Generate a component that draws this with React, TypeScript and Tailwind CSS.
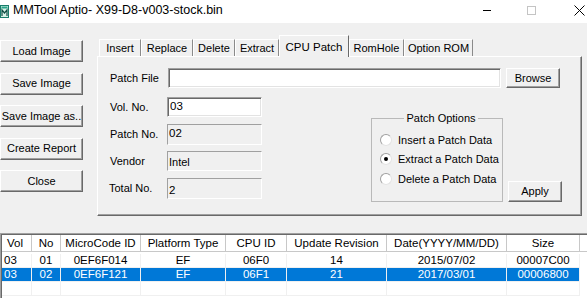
import React from 'react'

const font = { fontFamily: '"Liberation Sans", Arial, sans-serif' }

const raised =
  'bg-[#f0f0f0] border-t border-l border-white border-r border-b border-r-[#696969] border-b-[#696969] shadow-[inset_-1px_-1px_0_#a0a0a0]'

const sunken =
  'bg-white border border-[#a0a0a0] border-r-white border-b-white shadow-[inset_1px_1px_0_#696969,inset_-1px_-1px_0_#e3e3e3]'

const readonly =
  'bg-[#f0f0f0] border border-[#a0a0a0] border-r-white border-b-white'

function WinButton({ label, className }: { label: string; className: string }) {
  return (
    <div className={`${raised} ${className} flex items-center justify-center text-[11px] text-black whitespace-nowrap`}>
      {label}
    </div>
  )
}

function AppIcon() {
  return (
    <svg width="10" height="13" viewBox="0 0 10 13">
      <rect x="0.5" y="0.5" width="8" height="12" fill="#d9f2e8" stroke="#1a7d6b" />
      <rect x="1.5" y="1.5" width="6" height="2" fill="#2aa58a" />
      <path d="M2 11 V5 L4.5 8 L7 5 V11" fill="none" stroke="#0f4d44" strokeWidth="1.2" />
    </svg>
  )
}

function Radio({ checked, label }: { checked?: boolean; label: string }) {
  return (
    <div className="flex items-center h-[19.5px]">
      <div className="w-[12px] h-[12px] rounded-full bg-white border border-[#a0a0a0] border-r-[#e3e3e3] border-b-[#e3e3e3] flex items-center justify-center">
        {checked && <div className="w-[4px] h-[4px] rounded-full bg-black" />}
      </div>
      <span className="ml-[6px] text-[11px]">{label}</span>
    </div>
  )
}

const tabs = [
  { name: 'Insert', w: 'w-[42px]' },
  { name: 'Replace', w: 'w-[52px]' },
  { name: 'Delete', w: 'w-[42px]' },
  { name: 'Extract', w: 'w-[44px]' },
  { name: 'CPU Patch', w: 'w-[70px]', active: true },
  { name: 'RomHole', w: 'w-[55px]' },
  { name: 'Option ROM', w: 'w-[69px]' },
]

const columns = [
  { name: 'Vol', align: 'justify-start pl-[5px]' },
  { name: 'No', align: 'justify-center' },
  { name: 'MicroCode ID', align: 'justify-center' },
  { name: 'Platform Type', align: 'justify-center' },
  { name: 'CPU ID', align: 'justify-center' },
  { name: 'Update Revision', align: 'justify-center' },
  { name: 'Date(YYYY/MM/DD)', align: 'justify-center' },
  { name: 'Size', align: 'justify-center' },
]

const rows = [
  ['03', '01', '0EF6F014', 'EF', '06F0', '14', '2015/07/02', '00007C00'],
  ['03', '02', '0EF6F121', 'EF', '06F1', '21', '2017/03/01', '00006800'],
  ['', '', '', '', '', '', '', ''],
]

const gridCols = 'grid grid-cols-[30px_29px_80px_85px_61px_100px_120px_73px]'

export default function App() {
  return (
    <div style={font} className="w-[587px] h-[298px] overflow-hidden bg-[#f0f0f0] text-black">
      {/* Title bar */}
      <div className="h-[23px] bg-white flex items-center pb-[3px]">
        <div className="pl-0 pt-[2px]">
          <AppIcon />
        </div>
        <span className="ml-[3px] text-[12.5px]">MMTool Aptio- X99-D8-v003-stock.bin</span>
        <div className="ml-auto flex items-center">
          <div className="w-[8px] h-px bg-black" />
          <div className="ml-[36px] w-[9px] h-[9px] border border-[#c4c4c4]" />
          <svg className="ml-[38px]" width="11" height="11" viewBox="0 0 11 11">
            <path d="M0.5 0.5 L10.5 10.5 M10.5 0.5 L0.5 10.5" stroke="#000" strokeWidth="1" />
          </svg>
          <div className="w-[2px]" />
        </div>
      </div>

      {/* Body */}
      <div className="h-[210px] flex">
        {/* Left buttons */}
        <div className="w-[83px] pt-[17px] flex flex-col gap-[10.5px]">
          <WinButton label="Load Image" className="h-[22px]" />
          <WinButton label="Save Image" className="h-[22px]" />
          <WinButton label="Save Image as.." className="h-[22px]" />
          <WinButton label="Create Report" className="h-[22px]" />
          <WinButton label="Close" className="h-[22px]" />
        </div>

        {/* Tab control */}
        <div className="ml-[14px] pt-[12px] w-[485px]">
          <div className="flex items-end h-[21px] pl-[2px]">
            {tabs.map((t) =>
              t.active ? (
                <div
                  key={t.name}
                  className={`${t.w} relative z-10 h-[22px] -mb-px bg-[#f0f0f0] border-t border-l border-white border-r border-r-[#696969] flex items-start justify-center pt-[3px] text-[11.5px]`}
                >
                  {t.name}
                </div>
              ) : (
                <div
                  key={t.name}
                  className={`${t.w} h-[17px] bg-[#f0f0f0] border-t border-l border-white border-r border-r-[#8a8a8a] flex items-center justify-center text-[11px]`}
                >
                  {t.name}
                </div>
              ),
            )}
          </div>
          <div className="h-[160px] border-t border-l border-white border-r border-b border-r-[#696969] border-b-[#696969] shadow-[inset_-1px_-1px_0_#a0a0a0] pl-[12px] pt-[11px]">
            {/* Patch file row */}
            <div className="flex items-center">
              <span className="w-[58px] text-[11px]">Patch File</span>
              <div className={`${sunken} w-[333px] h-[20px]`} />
              <WinButton label="Browse" className="ml-[5px] w-[54px] h-[20px]" />
            </div>

            <div className="flex mt-[9px]">
              {/* Fields */}
              <div className="flex flex-col gap-[7px]">
                <div className="flex items-center h-[20px]">
                  <span className="w-[57px] text-[11px]">Vol. No.</span>
                  <div className={`${sunken} w-[95px] h-[20px] flex items-center pl-[2px] text-[11.5px]`}>03</div>
                </div>
                <div className="flex items-center h-[20px]">
                  <span className="w-[57px] text-[11px]">Patch No.</span>
                  <div className={`${readonly} w-[95px] h-[21px] flex items-center pl-[1px] text-[11.5px]`}>02</div>
                </div>
                <div className="flex items-center h-[20px]">
                  <span className="w-[57px] text-[11px]">Vendor</span>
                  <div className={`${readonly} w-[95px] h-[20px] pl-[1px] pt-[2px] text-[11px]`}>Intel</div>
                </div>
                <div className="flex items-center h-[20px]">
                  <span className="w-[57px] text-[11px] -ml-px">Total No.</span>
                  <div className={`${readonly} w-[95px] h-[21px] pl-[1px] pt-[3px] text-[11.5px] ml-px`}>2</div>
                </div>
              </div>

              {/* Patch options */}
              <fieldset className="ml-[109px] mt-[15px] w-[132px] h-[90px] border border-[#b9b9b9] pl-[8px] pt-[5px]">
                <legend className="mx-auto px-[2px] text-[11px] leading-[13px]">Patch Options</legend>
                <Radio label="Insert a Patch Data" />
                <Radio label="Extract a Patch Data" checked />
                <Radio label="Delete a Patch Data" />
              </fieldset>

              <WinButton label="Apply" className="ml-[5px] mt-[84px] w-[54px] h-[21px]" />
            </div>
          </div>
        </div>
      </div>

      {/* List view */}
      <div className="h-[65px] bg-white border-t border-l border-[#a0a0a0] shadow-[inset_1px_1px_0_#696969] pt-px pl-px">
        <div className={`${gridCols} h-[17px] bg-white border-b border-[#c8c8c8]`}>
          {columns.map((c) => (
            <div key={c.name} className={`flex items-center ${c.align} border-r border-[#c8c8c8] text-[11.5px] whitespace-nowrap`}>
              {c.name}
            </div>
          ))}
        </div>
        <div className="pt-[2px]">
          {rows.map((r, i) => (
            <div key={i} className={`${gridCols}`}>
              {r.map((v, j) => (
                <div
                  key={j}
                  className={`h-[14px] flex items-center border-r border-b border-[#f0f0f0] text-[11.5px] ${
                    j === 0 ? 'justify-start pl-[2px]' : 'justify-center'
                  } ${i === 1 ? 'bg-[#0078d7] text-white' : ''}`}
                >
                  {v}
                </div>
              ))}
            </div>
          ))}
        </div>
      </div>
    </div>
  )
}
